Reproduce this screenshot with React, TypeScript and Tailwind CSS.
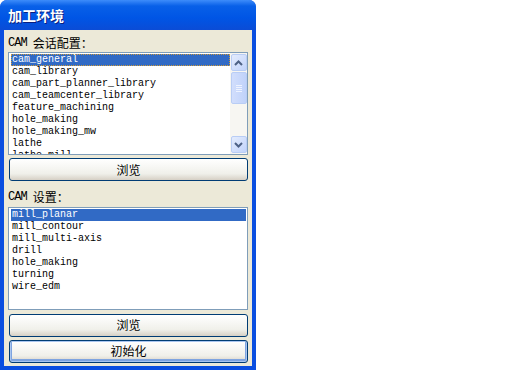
import React from 'react';

const sessions = [
  'cam_general',
  'cam_library',
  'cam_part_planner_library',
  'cam_teamcenter_library',
  'feature_machining',
  'hole_making',
  'hole_making_mw',
  'lathe',
  'lathe_mill',
];

const setups = ['mill_planar', 'mill_contour', 'mill_multi-axis', 'drill', 'hole_making', 'turning', 'wire_edm'];

const mono = { fontFamily: '"Liberation Mono", "Noto Sans CJK SC", monospace' };

function XpButton({ label, isDefault }: { label: string; isDefault?: boolean }) {
  return (
    <button
      className={
        'h-[23px] w-full rounded-[3px] border bg-[linear-gradient(#ffffff,#f0f0ea_70%,#d6d0c5)] text-[12px] leading-none text-black ' +
        (isDefault ? 'border-[#003c74] shadow-[inset_0_0_0_1px_#aac6f0,inset_0_-1px_0_2px_#7ea4e0]' : 'border-[#003c74]')
      }
      style={{ fontFamily: '"Noto Sans CJK SC", sans-serif' }}
    >
      {label}
    </button>
  );
}

function ScrollBtn({ up }: { up?: boolean }) {
  return (
    <div className="flex h-[17px] w-[16px] items-center justify-center rounded-[2px] border border-[#b9cdf5] bg-[linear-gradient(135deg,#e4ecfd,#c1d3fb)]">
      <svg width="9" height="6" viewBox="0 0 9 6">
        <path d={up ? 'M1 5 L4.5 1.5 L8 5' : 'M1 1 L4.5 4.5 L8 1'} fill="none" stroke="#4d6185" strokeWidth="2" />
      </svg>
    </div>
  );
}

function Label({ cjk }: { cjk: string }) {
  return (
    <div className="flex h-[17px] items-center text-black">
      <span className="text-[12px] tracking-[-1px]">CAM&nbsp;</span>
      <span className="text-[12px]" style={{ fontFamily: '"Noto Sans CJK SC", sans-serif' }}>
        {cjk}
      </span>
    </div>
  );
}

export default function App() {
  return (
    <div className="h-[384px] w-[512px] bg-white">
      <div className="flex h-[370px] w-[256px] flex-col overflow-hidden rounded-t-[7px] bg-[#0a4ee0]">
        <div className="flex h-[30px] items-center bg-[linear-gradient(#3d8cfa,#0860e8_20%,#0055e5_60%,#0b4cd6)] px-[8px]">
          <span
            className="text-[14px] font-bold text-white [text-shadow:1px_1px_0_#0a1e80]"
            style={{ fontFamily: '"Noto Sans CJK SC", sans-serif' }}
          >
            加工环境
          </span>
        </div>
        <div className="mx-[4px] mb-[4px] flex flex-1 flex-col bg-[#ece9d8] px-[4px]" style={mono}>
          <div className="mt-[4px]">
            <Label cjk="会话配置：" />
          </div>
          <div className="mt-[1px] flex h-[103px] border border-[#7f9db9] bg-white">
            <div className="flex-1 overflow-hidden pl-[2px] pt-[1px]">
              {sessions.map((s, i) => (
                <div
                  key={s}
                  className={
                    'h-[12px] pl-[1px] text-[10px] leading-[12px] whitespace-pre ' +
                    (i === 0 ? 'bg-[#316ac5] text-white outline-1 outline-dotted outline-[#ce9a3a] -outline-offset-1' : 'text-black')
                  }
                >
                  {s}
                </div>
              ))}
            </div>
            <div className="flex w-[17px] flex-col items-center bg-[#f7f6f2] py-[1px]">
              <ScrollBtn up />
              <div className="mt-[1px] flex h-[32px] w-[16px] flex-col items-center justify-center gap-[1px] rounded-[2px] border border-[#b9cdf5] bg-[linear-gradient(90deg,#d2defc,#c0d2fa)]">
                <div className="h-[1px] w-[6px] bg-[#eef3ff]" />
                <div className="h-[1px] w-[6px] bg-[#eef3ff]" />
                <div className="h-[1px] w-[6px] bg-[#eef3ff]" />
                <div className="h-[1px] w-[6px] bg-[#eef3ff]" />
              </div>
              <div className="flex-1" />
              <ScrollBtn />
            </div>
          </div>
          <div className="mt-[3px] pl-[1px]">
            <XpButton label="浏览" />
          </div>
          <div className="mt-[6px] mb-[1px]">
            <Label cjk="设置：" />
          </div>
          <div className="h-[103px] border border-[#7f9db9] bg-white pl-[2px] pt-[1px] pr-[1px]">
            {setups.map((s, i) => (
              <div
                key={s}
                className={
                  'h-[12px] pl-[1px] text-[10px] leading-[12px] whitespace-pre ' +
                  (i === 0 ? 'bg-[#316ac5] text-white' : 'text-black')
                }
              >
                {s}
              </div>
            ))}
          </div>
          <div className="mt-[4px] flex flex-col gap-[3px] pl-[1px]">
            <XpButton label="浏览" />
            <XpButton label="初始化" isDefault />
          </div>
        </div>
      </div>
    </div>
  );
}
